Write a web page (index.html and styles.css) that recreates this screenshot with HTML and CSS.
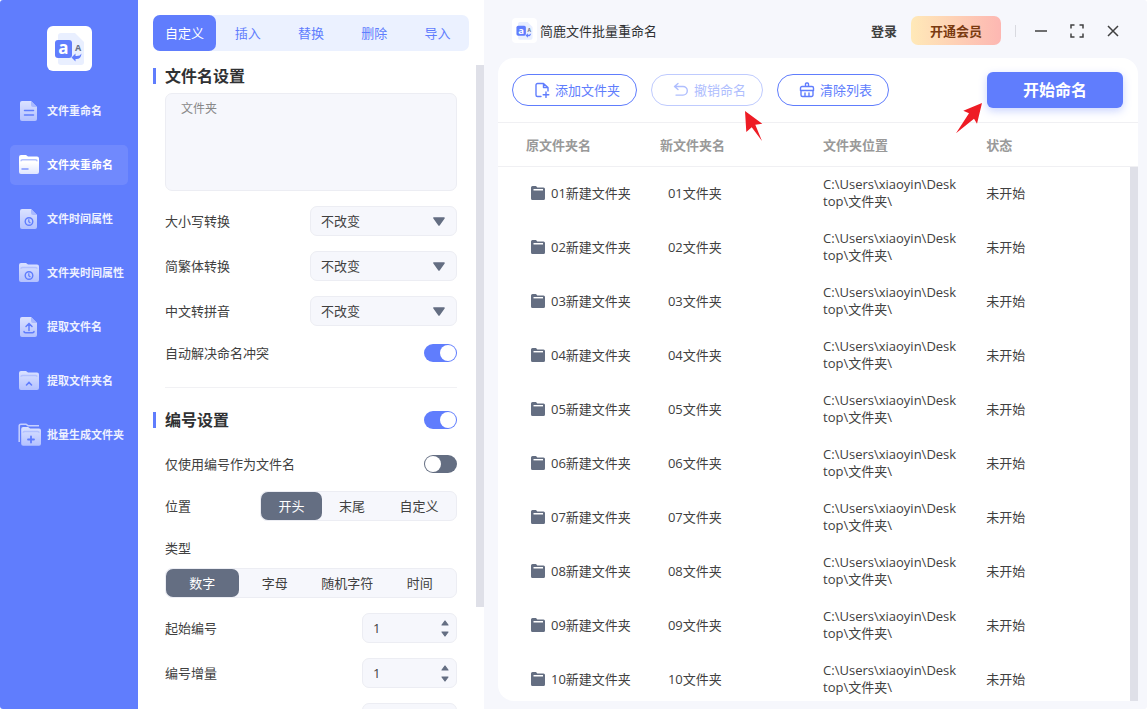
FILE: index.html
```html
<!DOCTYPE html>
<html lang="zh-CN">
<head>
<meta charset="utf-8">
<meta name="viewport" content="width=device-width, initial-scale=1">
<title>简鹿文件批量重命名</title>
<link rel="stylesheet" href="styles.css">
</head>
<body>
<svg class="defs" aria-hidden="true">
  <defs>
    <linearGradient id="fade" x1="0" y1="0" x2="0" y2="1"><stop offset="0" stop-color="#dbe2ff"/><stop offset="1" stop-color="#b3c1ff"/></linearGradient>
    <linearGradient id="fade-on" x1="0" y1="0" x2="0" y2="1"><stop offset="0.4" stop-color="#fff"/><stop offset="1" stop-color="#dfe5ff"/></linearGradient>
    <symbol id="doc" viewBox="0 0 22 22"><path d="M4 1h9l6 6v12a2 2 0 0 1-2 2H4a2 2 0 0 1-2-2V3a2 2 0 0 1 2-2z" fill="url(#fade)"/><path d="M13 1l6 6h-4a2 2 0 0 1-2-2z" fill="#a9b9ff"/></symbol>
    <symbol id="dir" viewBox="0 0 22 22"><path d="M3 1h5l2 1.500h9a2 2 0 0 1 2 2V18a2 2 0 0 1-2 2H3a2 2 0 0 1-2-2V3a2 2 0 0 1 2-2z" fill="url(#fade)"/><path d="M3 6.800q0-1.300 1.500-1.300h13q1.500 0 1.500 1.300" fill="none" stroke="#b3c1ff" stroke-width="1.500"/></symbol>
    <symbol id="clock" viewBox="0 0 10 10"><circle cx="5" cy="5" r="3.800" fill="none" stroke="#607dfd" stroke-width="1.400"/><path d="M4.800 2.800v2.500l1.600 1.200" fill="none" stroke="#607dfd" stroke-width="1.200"/></symbol>
    <symbol id="logo" viewBox="0 0 45 45">
      <path d="M14 7h14l9 9v20a3 3 0 0 1-3 3H14a3 3 0 0 1-3-3V10a3 3 0 0 1 3-3z" fill="#e9efff"/>
      <rect x="8" y="14" width="17" height="18" rx="3" fill="#607dfd"/>
      <text x="16.500" y="28" text-anchor="middle" font-family="Open Sans, sans-serif" font-weight="700" font-size="17" fill="#fff">a</text>
      <text x="31" y="25" text-anchor="middle" font-family="Open Sans, sans-serif" font-weight="700" font-size="9" fill="#667084">A</text>
      <path d="M24.500 31.500l4-4v2.500q4.500.5 6-2.500-.5 6-6 5.500v2.500z" fill="#607dfd"/>
    </symbol>
    <symbol id="folder" viewBox="0 0 14 14"><path d="M1.500 0h3.500l1.300 1.500H12.500A1.500 1.500 0 0 1 14 3v9.500a1.500 1.500 0 0 1-1.500 1.500h-11A1.500 1.500 0 0 1 0 12.500v-11A1.500 1.500 0 0 1 1.500 0z" fill="#646e82"/><path d="M2.500 3.700h9.500" stroke="#fff" stroke-width="1.400"/></symbol>
    <symbol id="up" viewBox="0 0 8 6"><path d="M4 1l3 4H1z" fill="#646e82" stroke="#646e82" stroke-width="1.200" stroke-linejoin="round"/></symbol>
    <symbol id="down" viewBox="0 0 8 6"><path d="M4 5L1 1h6z" fill="#646e82" stroke="#646e82" stroke-width="1.200" stroke-linejoin="round"/></symbol>
    <symbol id="caret" viewBox="0 0 12 9"><path d="M6 8L1 1h10z" fill="#646e82" stroke="#646e82" stroke-width="1.600" stroke-linejoin="round"/></symbol>
  </defs>
</svg>

<div class="app">
  <aside class="sidebar">
    <svg class="brand" role="img" aria-label="简鹿"><use href="#logo"/></svg>
    <nav class="menu">
      <a class="menu-item" href="#rename"><svg class="menu-icon" viewBox="0 0 22 22"><use href="#doc"/><path d="M6.500 10.500h9M6.500 15h9" stroke="#607dfd" stroke-width="1.500" stroke-linecap="round"/></svg>文件重命名</a>
      <a class="menu-item is-active" href="#folder-rename" aria-current="page"><svg class="menu-icon" viewBox="0 0 22 22"><path d="M3 1h5l2 1.500h9a2 2 0 0 1 2 2V18a2 2 0 0 1-2 2H3a2 2 0 0 1-2-2V3a2 2 0 0 1 2-2z" fill="url(#fade-on)"/><path d="M3 7.200q0-1.500 1.500-1.500h13q1.500 0 1.500 1.500" fill="none" stroke="#b3c1ff" stroke-width="1.500"/><path d="M4 15h6" stroke="#8097ff" stroke-width="1.500" stroke-linecap="round"/></svg>文件夹重命名</a>
      <a class="menu-item" href="#file-time"><svg class="menu-icon" viewBox="0 0 22 22"><use href="#doc"/><use href="#clock" x="6" y="8.500" width="10" height="10"/></svg>文件时间属性</a>
      <a class="menu-item" href="#folder-time"><svg class="menu-icon" viewBox="0 0 22 22"><use href="#dir"/><use href="#clock" x="6" y="8.500" width="10" height="10"/></svg>文件夹时间属性</a>
      <a class="menu-item" href="#extract"><svg class="menu-icon" viewBox="0 0 22 22"><use href="#doc"/><path d="M11 14.500V8M8 10.500l3-3 3 3M6 15.500q0 1.200 1.500 1.200h7q1.500 0 1.500-1.200" fill="none" stroke="#607dfd" stroke-width="1.500" stroke-linecap="round"/></svg>提取文件名</a>
      <a class="menu-item" href="#extract-folder"><svg class="menu-icon" viewBox="0 0 22 22"><use href="#dir"/><path d="M8.500 15l2.500-2.500 2.500 2.500" fill="none" stroke="#607dfd" stroke-width="1.600" stroke-linecap="round"/></svg>提取文件夹名</a>
      <a class="menu-item" href="#batch"><svg class="menu-icon menu-icon-stack" viewBox="0 0 24 24"><path d="M1.200 19V3q0-1.800 1.800-1.800h5l2 1.500h11" fill="none" stroke="#c6d0ff" stroke-width="1.500"/><use href="#dir" x="2.200" y="3" width="21.800" height="21.800"/><path d="M13 13.500v6M10 16.500h6" stroke="#607dfd" stroke-width="1.800" stroke-linecap="round"/></svg>批量生成文件夹</a>
    </nav>
  </aside>

  <section class="settings">
    <div class="tabs" role="tablist">
      <button class="tab is-active" role="tab" aria-selected="true">自定义</button>
      <button class="tab" role="tab">插入</button>
      <button class="tab" role="tab">替换</button>
      <button class="tab" role="tab">删除</button>
      <button class="tab" role="tab">导入</button>
    </div>
    <div class="form">
      <h2 class="heading"><label for="pattern">文件名设置</label></h2>
      <textarea class="pattern" id="pattern" placeholder="文件夹"></textarea>

      <div class="row">
        <label for="case">大小写转换</label>
        <span class="select-box"><select class="select" id="case"><option>不改变</option></select><svg class="caret"><use href="#caret"/></svg></span>
      </div>
      <div class="row">
        <label for="script">简繁体转换</label>
        <span class="select-box"><select class="select" id="script"><option>不改变</option></select><svg class="caret"><use href="#caret"/></svg></span>
      </div>
      <div class="row">
        <label for="pinyin">中文转拼音</label>
        <span class="select-box"><select class="select" id="pinyin"><option>不改变</option></select><svg class="caret"><use href="#caret"/></svg></span>
      </div>
      <div class="row row-switch">
        <label for="conflict">自动解决命名冲突</label>
        <input class="switch" type="checkbox" id="conflict" checked>
      </div>
      <hr class="rule">

      <div class="row row-heading">
        <h2 class="heading"><label for="numbering">编号设置</label></h2>
        <input class="switch" type="checkbox" id="numbering" checked>
      </div>
      <div class="row row-switch">
        <label for="only-number">仅使用编号作为文件名</label>
        <input class="switch" type="checkbox" id="only-number">
      </div>
      <div class="row row-segments" role="radiogroup" aria-labelledby="position-label">
        <span id="position-label">位置</span>
        <div class="segments segments-position">
          <label class="segment"><input type="radio" name="position" checked>开头</label>
          <label class="segment"><input type="radio" name="position">末尾</label>
          <label class="segment"><input type="radio" name="position">自定义</label>
        </div>
      </div>
      <div class="stack" role="radiogroup" aria-labelledby="type-label">
        <span id="type-label">类型</span>
        <div class="segments segments-type">
          <label class="segment"><input type="radio" name="type" checked>数字</label>
          <label class="segment"><input type="radio" name="type">字母</label>
          <label class="segment"><input type="radio" name="type">随机字符</label>
          <label class="segment"><input type="radio" name="type">时间</label>
        </div>
      </div>
      <div class="row">
        <label for="start">起始编号</label>
        <span class="stepper"><input type="number" id="start" value="1"><span class="steps"><button aria-label="增加"><svg><use href="#up"/></svg></button><button aria-label="减少"><svg><use href="#down"/></svg></button></span></span>
      </div>
      <div class="row">
        <label for="increment">编号增量</label>
        <span class="stepper"><input type="number" id="increment" value="1"><span class="steps"><button aria-label="增加"><svg><use href="#up"/></svg></button><button aria-label="减少"><svg><use href="#down"/></svg></button></span></span>
      </div>
      <div class="row row-end">
        <span class="stepper"><input type="number" aria-label="编号位数"><span class="steps"><button aria-label="增加"><svg><use href="#up"/></svg></button><button aria-label="减少"><svg><use href="#down"/></svg></button></span></span>
      </div>
    </div>
    <div class="scroll-thumb"></div>
  </section>

  <main class="main">
    <header class="titlebar">
      <svg class="mini-brand" aria-hidden="true"><use href="#logo"/></svg>
      <h1 class="title">简鹿文件批量重命名</h1>
      <button class="login">登录</button>
      <button class="vip">开通会员</button>
      <span class="divider"></span>
      <div class="window-buttons">
        <button aria-label="最小化"><svg viewBox="0 0 14 14"><path d="M1 7h12"/></svg></button>
        <button aria-label="最大化"><svg viewBox="0 0 14 14"><path d="M1 4.500V1h3.500M9.500 1H13v3.500M13 9.500V13H9.500M4.500 13H1V9.500"/></svg></button>
        <button aria-label="关闭"><svg viewBox="0 0 14 14"><path d="M2 2l10 10M12 2L2 12"/></svg></button>
      </div>
    </header>

    <div class="card">
      <div class="toolbar">
        <button class="pill"><svg viewBox="0 0 16 16"><path d="M7 14.500H3.500a1.500 1.500 0 0 1-1.500-1.500V3a1.500 1.500 0 0 1 1.500-1.500h6L14 5.500V9M9.500 1.500v4H14M12 10v5.500M9.200 12.800h5.600"/></svg>添加文件夹</button>
        <div class="anchor">
          <button class="pill" disabled><svg viewBox="0 0 16 16"><path d="M5 1.500l-3.500 3 3.500 3M1.500 4.500H10a4.300 4.300 0 0 1 0 8.600H3"/></svg>撤销命名</button>
          <svg class="pointer pointer-undo" viewBox="0 0 18 31"><path d="M0 0l17.300 12.700-7 1L17 30 6.700 16.300 1.300 21z" fill="#ee1c25"/></svg>
        </div>
        <button class="pill"><svg viewBox="0 0 16 16"><path d="M6.500 4.500V2A1 1 0 0 1 7.500 1h1a1 1 0 0 1 1 1v2.500M3 4.500h10a1.500 1.500 0 0 1 1.500 1.500v2.500h-13V6A1.500 1.500 0 0 1 3 4.500zM2 8.500V13a1.500 1.500 0 0 0 1.500 1.500h9A1.500 1.500 0 0 0 14 13V8.500M6 14v-3M10 14v-3"/></svg>清除列表</button>
        <div class="anchor anchor-end">
          <button class="start">开始命名</button>
          <svg class="pointer pointer-start" viewBox="0 0 26 31"><path d="M26 0L7.300 7.700l5.700 2.600L0 30.300l18-14.600 3 5z" fill="#ee1c25"/></svg>
        </div>
      </div>
      <div class="list">
        <table class="files">
          <colgroup><col class="col-old"><col class="col-new"><col class="col-path"><col></colgroup>
          <thead><tr><th>原文件夹名</th><th>新文件夹名</th><th>文件夹位置</th><th>状态</th></tr></thead>
          <tbody>
            <tr><td><span class="name"><svg><use href="#folder"/></svg>01新建文件夹</span></td><td>01文件夹</td><td>C:\Users\xiaoyin\Desk<br>top\文件夹\</td><td>未开始</td></tr>
            <tr><td><span class="name"><svg><use href="#folder"/></svg>02新建文件夹</span></td><td>02文件夹</td><td>C:\Users\xiaoyin\Desk<br>top\文件夹\</td><td>未开始</td></tr>
            <tr><td><span class="name"><svg><use href="#folder"/></svg>03新建文件夹</span></td><td>03文件夹</td><td>C:\Users\xiaoyin\Desk<br>top\文件夹\</td><td>未开始</td></tr>
            <tr><td><span class="name"><svg><use href="#folder"/></svg>04新建文件夹</span></td><td>04文件夹</td><td>C:\Users\xiaoyin\Desk<br>top\文件夹\</td><td>未开始</td></tr>
            <tr><td><span class="name"><svg><use href="#folder"/></svg>05新建文件夹</span></td><td>05文件夹</td><td>C:\Users\xiaoyin\Desk<br>top\文件夹\</td><td>未开始</td></tr>
            <tr><td><span class="name"><svg><use href="#folder"/></svg>06新建文件夹</span></td><td>06文件夹</td><td>C:\Users\xiaoyin\Desk<br>top\文件夹\</td><td>未开始</td></tr>
            <tr><td><span class="name"><svg><use href="#folder"/></svg>07新建文件夹</span></td><td>07文件夹</td><td>C:\Users\xiaoyin\Desk<br>top\文件夹\</td><td>未开始</td></tr>
            <tr><td><span class="name"><svg><use href="#folder"/></svg>08新建文件夹</span></td><td>08文件夹</td><td>C:\Users\xiaoyin\Desk<br>top\文件夹\</td><td>未开始</td></tr>
            <tr><td><span class="name"><svg><use href="#folder"/></svg>09新建文件夹</span></td><td>09文件夹</td><td>C:\Users\xiaoyin\Desk<br>top\文件夹\</td><td>未开始</td></tr>
            <tr><td><span class="name"><svg><use href="#folder"/></svg>10新建文件夹</span></td><td>10文件夹</td><td>C:\Users\xiaoyin\Desk<br>top\文件夹\</td><td>未开始</td></tr>
          </tbody>
        </table>
        <div class="list-thumb"></div>
      </div>
    </div>
  </main>
</div>
</body>
</html>
```
FILE: styles.css
```css
:root {
  --blue: #607dfd;
  --slate: #646e82;
  --field: #f6f7fc;
  --line: #ecedf3;
  --text: #404040;
}

* { box-sizing: border-box; }

body {
  margin: 0;
  background: #fff;
  color: var(--text);
  font: 13px/18px "Open Sans", "Noto Sans CJK SC", sans-serif;
}

button, input, select { font: inherit; color: inherit; }

button {
  margin: 0;
  padding: 0;
  border: 0;
  background: none;
  cursor: pointer;
}

h1, h2 { margin: 0; }

.defs { position: absolute; width: 0; height: 0; }

.app {
  display: grid;
  grid-template-columns: 138px 346px minmax(0, 1fr);
  height: 100vh;
  overflow: hidden;
  border-radius: 3px;
}

/* Sidebar */
.sidebar {
  display: flex;
  flex-direction: column;
  align-items: center;
  gap: 20px;
  padding: 26px 10px;
  background: var(--blue);
}

.brand {
  flex: none;
  width: 45px;
  height: 45px;
  border-radius: 6px;
  background: #fff;
}

.menu {
  display: flex;
  flex-direction: column;
  gap: 14px;
  width: 100%;
}

.menu-item {
  display: flex;
  align-items: center;
  gap: 7px;
  height: 40px;
  padding-left: 8px;
  border-radius: 5px;
  color: #eef1ff;
  font-size: 11px;
  font-weight: 700;
  text-decoration: none;
  white-space: nowrap;
}

.menu-item.is-active { background: #7089fd; color: #fff; }

.menu-icon { flex: none; width: 22px; height: 22px; }
.menu-icon-stack { width: 24px; height: 24px; margin-right: -2px; }

/* Settings */
.settings {
  position: relative;
  min-height: 0;
  padding: 15px 15px 0;
  overflow: hidden;
}

.tabs {
  display: grid;
  grid-template-columns: repeat(5, 1fr);
  height: 36px;
  border-radius: 7px;
  background: #ebf1ff;
}

.tab { border-radius: 7px; color: var(--blue); }
.tab.is-active { background: var(--blue); color: #fff; }

.form {
  display: flex;
  flex-direction: column;
  gap: 15px;
  padding: 17px 12px 0;
}

.heading {
  margin-left: -12px;
  padding-left: 9px;
  border-left: 3px solid var(--blue);
  color: #303133;
  font-size: 16px;
  line-height: 16px;
}

.pattern {
  height: 98px;
  margin: -6px 0 0;
  padding: 6px 15px;
  border: 1px solid var(--line);
  border-radius: 7px;
  background: var(--field);
  font: 12px/18px "Liberation Serif", "Noto Sans CJK SC", serif;
  resize: none;
}

.pattern::placeholder { color: #888; }

.row {
  display: flex;
  align-items: center;
  justify-content: space-between;
  min-height: 30px;
}

.row-end { justify-content: flex-end; }

.select-box { position: relative; width: 147px; }

.select {
  display: block;
  width: 100%;
  height: 30px;
  padding: 0 10px;
  border: 1px solid var(--line);
  border-radius: 7px;
  background: var(--field);
  appearance: none;
}

.caret {
  position: absolute;
  top: 11px;
  right: 12px;
  width: 12px;
  height: 9px;
  pointer-events: none;
}

.row-switch { min-height: 24px; }

.switch {
  width: 33px;
  height: 18px;
  margin: 0;
  border-radius: 9px;
  background: var(--slate);
  appearance: none;
}

.switch::before {
  content: "";
  display: block;
  width: 16px;
  height: 16px;
  margin: 1px;
  border-radius: 50%;
  background: #fff;
}

.switch:checked { background: var(--blue); }
.switch:checked::before { margin-left: 16px; }

.rule {
  width: 100%;
  height: 1px;
  margin: 7px 0 0;
  border: 0;
  background: #f1f1f4;
}

.row-heading { min-height: 34px; }

.segments {
  display: grid;
  height: 30px;
  border: 1px solid var(--line);
  border-radius: 7px;
  background: var(--field);
}

.segments-position { grid-template-columns: 61px 60px 1fr; width: 197px; }
.segments-type { grid-template-columns: repeat(4, 1fr); }

.segment {
  display: flex;
  align-items: center;
  justify-content: center;
  border-radius: 7px;
}

.segment input { position: absolute; opacity: 0; }
.segment:has(:checked) { background: var(--slate); color: #fff; }

.stack { display: grid; gap: 11px; margin-top: 3px; }

.stepper {
  display: flex;
  align-items: center;
  justify-content: space-between;
  width: 95px;
  height: 30px;
  padding: 0 7px 0 10px;
  border: 1px solid var(--line);
  border-radius: 7px;
  background: var(--field);
}

.stepper input {
  width: 50px;
  padding: 0;
  border: 0;
  background: none;
  appearance: textfield;
}

.stepper input::-webkit-inner-spin-button { appearance: none; }
.steps { display: grid; gap: 5px; }
.steps button { display: block; height: 6px; line-height: 0; }
.steps svg { width: 8px; height: 6px; }

.scroll-thumb {
  position: absolute;
  top: 65px;
  right: 0;
  width: 8px;
  height: 542px;
  background: #dfe0e8;
}

/* Main area */
.main {
  display: flex;
  flex-direction: column;
  min-height: 0;
  padding: 0 9px 8px 14px;
  background: #f6f7fc;
}

.titlebar {
  display: flex;
  flex: none;
  align-items: center;
  height: 58px;
  padding: 3px 18px 0 14px;
}

.mini-brand {
  width: 25px;
  height: 25px;
  border-radius: 4px;
  background: #fff;
}

.title {
  margin: 0 auto 0 3px;
  font-size: 13px;
  font-weight: 400;
  color: #303133;
}

.login { font-weight: 700; }

.vip {
  width: 90px;
  height: 29px;
  margin-left: 14px;
  border-radius: 7px;
  background: linear-gradient(90deg, #ffe9b8, #fdb7b2);
  color: #7a3a10;
  font-weight: 700;
}

.divider {
  width: 1px;
  height: 12px;
  margin: 0 18px 0 14px;
  background: #d9dae0;
}

.window-buttons { display: flex; gap: 22px; }
.window-buttons button { line-height: 0; }

.window-buttons svg {
  width: 14px;
  height: 14px;
  fill: none;
  stroke: #404040;
  stroke-width: 1.5;
}

.card {
  display: flex;
  flex: 1;
  flex-direction: column;
  min-height: 0;
  overflow: hidden;
  border-radius: 16px 16px 0 16px;
  background: #fff;
}

.toolbar {
  display: flex;
  flex: none;
  align-items: center;
  gap: 14px;
  height: 65px;
  padding: 0 15px 0 14px;
  border-bottom: 1px solid #f0f0f3;
}

.pill {
  display: flex;
  align-items: center;
  gap: 5px;
  height: 32px;
  padding: 0 16px 0 21px;
  border: 1px solid var(--blue);
  border-radius: 16px;
  color: var(--blue);
  white-space: nowrap;
}

.pill svg {
  width: 16px;
  height: 16px;
  fill: none;
  stroke: currentColor;
  stroke-width: 1.4;
  stroke-linecap: round;
  stroke-linejoin: round;
}

.pill:disabled { border-color: #bfcbfe; color: #afbefe; }

.anchor { position: relative; }
.anchor-end { margin-left: auto; }

.start {
  width: 136px;
  height: 36px;
  border-radius: 6px;
  background: var(--blue);
  box-shadow: 0 3px 8px #607dfd55;
  color: #fff;
  font-size: 16px;
  font-weight: 700;
}

.pointer { position: absolute; z-index: 1; }
.pointer-undo { top: 37px; left: 94px; width: 18px; height: 31px; }
.pointer-start { top: 31px; left: -31px; width: 26px; height: 31px; }

.list { position: relative; flex: 1; min-height: 0; }

.files {
  width: 100%;
  border-spacing: 0;
  table-layout: fixed;
  text-align: left;
}

.col-old { width: 25.3%; }
.col-new, .col-path { width: 25.5%; }

.files th {
  height: 44px;
  padding: 0;
  border-bottom: 1px solid #f0f0f3;
  color: #999;
}

.files th:first-child { padding-left: 28px; }

.files td {
  height: 54px;
  padding: 0 0 2px;
  line-height: 17px;
}

.files td:first-child { padding-left: 33px; }
.files td:nth-child(2) { padding-left: 8px; }

.name { display: flex; align-items: center; gap: 6px; white-space: nowrap; }
.name svg { flex: none; width: 14px; height: 14px; }

.list-thumb {
  position: absolute;
  top: 44px;
  right: 0;
  bottom: 0;
  width: 8px;
  background: #dfe0e8;
}
```
